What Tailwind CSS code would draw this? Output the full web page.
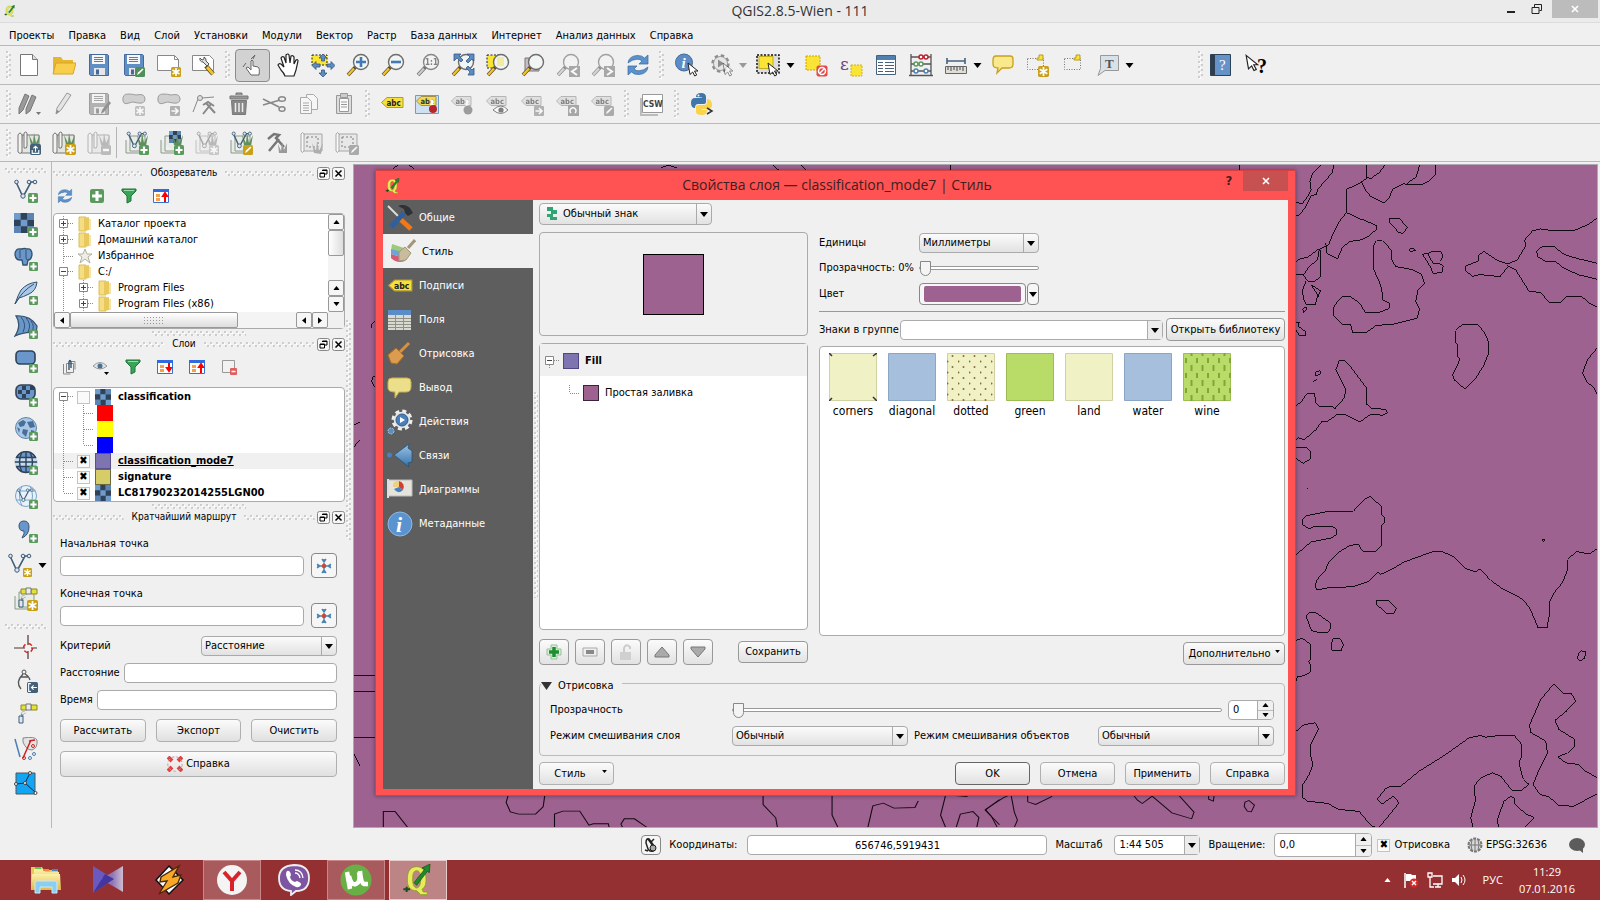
<!DOCTYPE html>
<html lang="ru">
<head>
  <meta charset="UTF-8">
  <meta name="viewport" content="width=device-width, initial-scale=1.0">
  <title>QGIS2.8.5-Wien - 111</title>
  <script src="https://cdn.jsdelivr.net/npm/@tailwindcss/browser@4"></script>
</head>
<body class="h-screen flex flex-col overflow-hidden bg-[#f0f0f0] text-black text-[11px] leading-4 font-['DejaVu_Sans_Condensed','DejaVu_Sans',sans-serif]">

  <!-- Shared icons -->
  <svg class="absolute h-0 w-0">
    <defs>
      <pattern id="grip" width="6" height="5" patternUnits="userSpaceOnUse"><path d="M1 1h2v2H1zM4 4h2v1H4z" fill="#fff"/><path d="M0 0h2v2H0zM3 3h2v2H3z" fill="#cdcdcd"/></pattern>
      <pattern id="dots" width="11" height="11" patternUnits="userSpaceOnUse"><circle cx="5.500" cy="3" r="1" fill="#8a6a3a"/><circle cx="0.500" cy="8.500" r="1" fill="#8a6a3a"/></pattern>
      <pattern id="dashes" width="11" height="15" patternUnits="userSpaceOnUse"><path d="M3 5v5M8.500 0v3M8.500 12v3" stroke="#7fa53b" stroke-width="2"/></pattern>
      <linearGradient id="blue" x2="0" y2="1"><stop stop-color="#9cc4e8"/><stop offset="1" stop-color="#3572a8"/></linearGradient>
      <linearGradient id="violet" x2="1"><stop stop-color="#8f86d8"/><stop offset=".5" stop-color="#8a80cc"/><stop offset="1" stop-color="#d9d6ee"/></linearGradient>
      <linearGradient id="gold" x2="0" y2="1"><stop stop-color="#fdf0a8"/><stop offset="1" stop-color="#dcb94a"/></linearGradient>
    </defs>
    <symbol id="b-plus" viewBox="0 0 10 10"><rect width="10" height="10" rx="1.500" fill="#5a9a5c"/><path d="M5 1.500v7M1.500 5h7" stroke="#fff" stroke-width="2.200"/></symbol>
    <symbol id="b-star" viewBox="0 0 10 10"><rect width="10" height="10" rx="1.500" fill="#c9a017"/><path d="M5 1v8M1.500 3l7 4M8.500 3l-7 4" stroke="#fff" stroke-width="1.600"/></symbol>
    <symbol id="b-pen" viewBox="0 0 10 10"><rect width="10" height="10" rx="1.500" fill="#4f8f58"/><path d="M2 8l1-2.500L7.500 1.500l1 1L4 7z" fill="#fff"/></symbol>
    <symbol id="b-penY" viewBox="0 0 10 10"><rect width="10" height="10" rx="1.500" fill="#c9a017"/><path d="M2 8l1-2.500L7.500 1.500l1 1L4 7z" fill="#fff"/></symbol>
    <symbol id="b-up" viewBox="0 0 10 10"><rect width="10" height="10" rx="1.500" fill="#41607a"/><path d="M5 7V2M3 4l2-2 2 2M2 5.500v3h6v-3" fill="none" stroke="#fff"/></symbol>
    <symbol id="b-left" viewBox="0 0 10 10"><rect width="10" height="10" rx="1.500" fill="#41607a"/><path d="M3.500 1.500h-2v7h2M9 5H4M6 3L4 5l2 2" fill="none" stroke="#fff"/></symbol>
    <symbol id="b-minus" viewBox="0 0 10 10"><rect width="10" height="10" rx="1.500" fill="#888"/><path d="M2 5h6" stroke="#fff" stroke-width="2.400"/></symbol>
    <symbol id="b-right" viewBox="0 0 10 10"><rect width="10" height="10" rx="1" fill="#888"/><path d="M1.500 5h6M5 2l3 3-3 3" fill="none" stroke="#fff" stroke-width="1.600"/></symbol>
    <symbol id="lens" viewBox="0 0 24 24"><path d="M9.500 14L2 22" stroke="#5a4a2a" stroke-width="3.600"/><path d="M8 15.500L2.300 21.700" stroke="#f2c230" stroke-width="2.400"/><circle cx="15" cy="9" r="7.500" fill="#f1f5f3" stroke="#6c6c6c" stroke-width="1.400"/></symbol>
    <symbol id="disk" viewBox="0 0 24 24"><path d="M2.500 1.500h18l1 1v20h-18l-1-1z" fill="#5f8fc4" stroke="#44699a"/><path d="M5 2h13v9H5z" fill="#f6f6f6"/><path d="M7 4.500h9M7 6.500h9M7 8.500h9" stroke="#777"/><path d="M7 15h11v7H7z" fill="#e4e6ea"/><path d="M9 16.500h3v5H9z" fill="#44699a"/></symbol>
    <symbol id="cursor" viewBox="0 0 12 15"><path d="M1 1l10 8H7.500l2.200 4-2 1-2-4L3 12.500z" fill="#fff" stroke="#222"/></symbol>
    <symbol id="tag" viewBox="0 0 24 24"><path d="M7 6.500h16v10H7L1.500 11.500z" fill="#f6e13c" stroke="#b4992a"/><text x="6.500" y="14.500" font-size="8" font-weight="700" font-family="DejaVu Sans Condensed" fill="#222">abc</text></symbol>
    <symbol id="tagS" viewBox="0 0 24 24"><path d="M6 4.500h15v9H6L1.500 9z" fill="#f0dc50" stroke="#a89040"/><text x="5.500" y="12" font-size="7.500" font-weight="700" font-family="DejaVu Sans Condensed" fill="#333">abc</text></symbol>
    <symbol id="vee" viewBox="0 0 24 24"><path d="M2 3l7 15L17 3h5" fill="none" stroke="#3f5e78" stroke-width="1.600"/><g fill="#dfe8f2" stroke="#3f5e78"><circle cx="2.500" cy="3" r="1.800"/><circle cx="15" cy="3" r="1.800"/><circle cx="21" cy="3" r="1.800"/><circle cx="9" cy="17" r="2.200"/></g></symbol>
    <symbol id="check" viewBox="0 0 12 12"><path d="M0 0h12v12H0z" fill="#6f9bcd"/><path d="M0 4h4v4H0zM4 0h4v4H4zM8 4h4v4H8zM4 8h4v4H4z" fill="#2f4257"/><path d="M8 0h4v4H8zM0 8h4v4H0z" fill="#5b84b4"/></symbol>
    <symbol id="scroll" viewBox="0 0 24 24"><path d="M5 4h17v18H4z" fill="#e4e4e0" stroke="#777"/><path d="M1 4q2-4 4 0v17q-2 3-4 0zM7 2q2-2 3 0v13q0 3-3 2z" fill="#f2f2f0" stroke="#777"/></symbol>
    <symbol id="grass" viewBox="0 0 24 24"><path d="M14 14L12 4l4 8 1-10 2 10 4-8-2 11z" fill="#5f8f5a"/></symbol>
    <symbol id="layer" viewBox="0 0 24 24"><path d="M5 5h15v15H5zM1 9v13h14" fill="#e8ece6" stroke="#8a9a8a"/></symbol>
    <symbol id="refresh" viewBox="0 0 24 24"><path d="M2 10Q3 3 11 2.500q5-.3 7.500 2.500L22 2v9h-9l3-3q-2-2-5-1.800Q6 6.500 2 10zM22 14q-1 7-9 7.500-5 .3-7.500-2.500L2 22v-9h9l-3 3q2 2 5 1.800 5-.3 9-3.800z" fill="#5b92cd" stroke="#39699f" stroke-width=".7"/></symbol>
    <symbol id="gear" viewBox="0 0 24 24"><circle cx="12" cy="12" r="8" fill="none" stroke="#8d8d8d" stroke-width="5" stroke-dasharray="3.500 2.780"/><circle cx="12" cy="12" r="8" fill="#e6e6e6" stroke="#8d8d8d"/></symbol>
    <symbol id="gearW" viewBox="0 0 24 24"><circle cx="12" cy="12" r="9" fill="none" stroke="#eee" stroke-width="5" stroke-dasharray="4 3.070"/><circle cx="12" cy="12" r="9" fill="#e6e6e6"/></symbol>
    <symbol id="funnel" viewBox="0 0 16 16"><path d="M1 1h14v2l-5 5v5l-4 2V8L1 3z" fill="#39a457" stroke="#1f7336"/><path d="M3 2.500h10" stroke="#9bdcaa"/></symbol>
    <symbol id="expand" viewBox="0 0 16 16"><path d="M.5 1.500h15v13H.5z" fill="#fff" stroke="#3a6fcf"/><path d="M0 1h16v3H0z" fill="#2e6be0"/><path d="M3 6h4v3H3zM3 10h4v3H3z" fill="#f5a04a"/></symbol>
    <symbol id="folder" viewBox="0 0 14 16"><path d="M1 1h7v14H1z" fill="#f5dd83" stroke="#d9bd5b"/><path d="M6 2l5-1v13l-5 1z" fill="#e9c95e"/><path d="M11 3h2v11h-2z" fill="#f3e3a6"/></symbol>
    <symbol id="t-plus" viewBox="0 0 20 16"><path d="M9.500 0v16M10 7.500h9" stroke="#8a8a8a" stroke-dasharray="1 1"/><path d="M5.500 3.500h8v8h-8z" fill="#fff" stroke="#888"/><path d="M7 7.500h5M9.500 5v5" stroke="#444"/></symbol>
    <symbol id="t-minus" viewBox="0 0 20 16"><path d="M9.500 12v4M10 7.500h9" stroke="#8a8a8a" stroke-dasharray="1 1"/><path d="M5.500 3.500h8v8h-8z" fill="#fff" stroke="#888"/><path d="M7 7.500h5" stroke="#444"/></symbol>
    <symbol id="t-mid" viewBox="0 0 20 16"><path d="M9.500 0v16M10 8.500h9" stroke="#8a8a8a" stroke-dasharray="1 1"/></symbol>
    <symbol id="t-end" viewBox="0 0 20 16"><path d="M9.500 0v8M10 8.500h9" stroke="#8a8a8a" stroke-dasharray="1 1"/></symbol>
    <symbol id="t-line" viewBox="0 0 20 16"><path d="M9.500 0v16" stroke="#8a8a8a" stroke-dasharray="1 1"/></symbol>
    <symbol id="down" viewBox="0 0 8 5"><path d="M0 0h8L4 5z"/></symbol>
    <symbol id="up" viewBox="0 0 8 5"><path d="M0 5h8L4 0z"/></symbol>
    <symbol id="float" viewBox="0 0 13 13"><rect x=".5" y=".5" width="12" height="12" rx="2" fill="#f6f6f6" stroke="#888"/><path d="M5.500 3h4.500v4H8M3 6h4.500v4H3zM5 3.500h5M3 6.500h5" fill="none" stroke="#000"/></symbol>
    <symbol id="close" viewBox="0 0 13 13"><rect x=".5" y=".5" width="12" height="12" rx="2" fill="#f6f6f6" stroke="#888"/><path d="M3.500 3.500l6 6M9.500 3.500l-6 6" stroke="#000" stroke-width="1.500"/></symbol>
    <symbol id="cross" viewBox="0 0 16 16"><path d="M8 1v14M1 8h14M6 1l2 3 2-3M6 15l2-3 2 3M1 6l3 2-3 2M15 6l-3 2 3 2" fill="none" stroke="#4a86b4" stroke-width="1.500"/><circle cx="8" cy="8" r="2.300" fill="#c94a3c"/></symbol>
    <symbol id="sat" viewBox="0 0 24 24"><path d="M7 2h6v5H7zM17 2h6v5h-6z" fill="#e3e23c" stroke="#8a8a20"/><path d="M12 1h5v6h-5z" fill="#ececec" stroke="#777"/><path d="M9 13q0-3 3-3M7 12q0-4 4-4" fill="none" stroke="#bbb"/><path d="M5 13h4v7H5zM8 11v3" fill="#dfe8f2" stroke="#3f5e78"/></symbol>
    <symbol id="qgis" viewBox="0 0 24 24"><path d="M11 2C5 2 4 7 4 12s2 8 7 8l3 3h5v-2h-3l-1-2c3-2 3-5 3-8 0-5-2-9-7-9zm0 3c3 0 3 4 3 7s-1 6-3 6-3-3-3-6 0-7 3-7z" fill="#e6ec5a" stroke="#8a9a20" stroke-width=".6"/><path d="M9 14L17 4l-2-1 6-3-.5 6.500-1.500-1L11 16z" fill="#1e8a2c" stroke="#0a4a12" stroke-width=".5"/><path d="M1 19h5M3.500 17v4" stroke="#16501c" stroke-width="1.500"/></symbol>
  </svg>

  <!-- Title bar -->
  <header class="flex h-[23px] shrink-0 items-center border-b border-[#dcdcdc] bg-[#ebebeb] pl-1">
    <svg class="size-3"><use href="#qgis"/></svg>
    <h1 class="flex-1 pl-[86px] text-center text-[14px] leading-5 text-[#333] font-['Open_Sans',sans-serif]">QGIS2.8.5-Wien - 111</h1>
    <div class="flex self-start">
      <button class="flex h-[18px] w-[26px] items-center justify-center" aria-label="Свернуть"><svg class="size-3" viewBox="0 0 12 12"><path d="M2 9h8" stroke="#222" stroke-width="2"/></svg></button>
      <button class="flex h-[18px] w-[26px] items-center justify-center" aria-label="Восстановить"><svg class="size-3" viewBox="0 0 12 12"><path d="M1 4.500h7v6H1zM3.500 4V1.500h7v6H8.500" fill="none" stroke="#222"/></svg></button>
      <button class="mr-0.5 ml-0.5 flex h-[18px] w-[46px] items-center justify-center bg-[#bcbcbc]" aria-label="Закрыть"><svg class="size-2" viewBox="0 0 8 8"><path d="M1 1l6 6M7 1L1 7" stroke="#fff" stroke-width="1.600"/></svg></button>
    </div>
  </header>

  <!-- Menu -->
  <nav class="flex h-[22px] shrink-0 items-center gap-[14px] pl-[9px] pt-1">
    <a href="#">Проекты</a><a href="#">Правка</a><a href="#">Вид</a><a href="#">Слой</a><a href="#">Установки</a><a href="#">Модули</a><a href="#">Вектор</a><a href="#">Растр</a><a href="#">База данных</a><a href="#">Интернет</a><a href="#">Анализ данных</a><a href="#">Справка</a>
  </nav>

  <!-- Toolbar: files and navigation -->
  <div class="flex h-[39px] shrink-0 items-center border-t border-[#b9b9b9] pl-[6px] [&_button]:flex [&_button]:h-[33px] [&_button]:w-[35px] [&_button]:shrink-0 [&_button]:items-center [&_button]:justify-center">
    <svg class="h-7 w-[5px]"><rect width="100%" height="100%" fill="url(#grip)"/></svg>
    <button aria-label="Создать"><svg class="size-6" viewBox="0 0 24 24"><path d="M3.500 1.500h12l5 5v16h-17z" fill="#fff" stroke="#777"/><path d="M15.500 1.500v5h5" fill="#ddd" stroke="#777"/></svg></button>
    <button aria-label="Открыть"><svg class="size-6" viewBox="0 0 24 24"><path d="M1 4h8l2 3h10v13H1z" fill="#e8b52e"/><path d="M4 10h20l-3 11H1z" fill="#f8cf4d" stroke="#d9a520"/></svg></button>
    <button aria-label="Сохранить"><svg class="size-6"><use href="#disk"/></svg></button>
    <button aria-label="Сохранить как"><svg class="size-6"><use href="#disk"/><use href="#b-pen" x="13" y="14" width="10" height="10"/></svg></button>
    <button aria-label="Новый макет"><svg class="size-6" viewBox="0 0 24 24"><path d="M.5 2.500h17l4 4v11H.5z" fill="#fff" stroke="#888"/><path d="M17.500 2.500v4h4" fill="none" stroke="#888"/><use href="#b-star" x="14" y="14" width="10" height="10"/></svg></button>
    <button aria-label="Менеджер макетов"><svg class="size-6" viewBox="0 0 24 24"><path d="M.5 2.500h17l4 4v11H.5z" fill="#fff" stroke="#888"/><path d="M14 13l7 8" stroke="#5a4a2a" stroke-width="4.500"/><path d="M15 14l6 7" stroke="#f2c230" stroke-width="3"/><path d="M15 13l-4-4a3 3 0 0 1-3-4l2 2 2-1V4a3.500 3.500 0 0 1 2 4l3 3z" fill="#ddd" stroke="#555"/></svg></button>
    <svg class="mr-[5px] ml-1 h-7 w-[5px]"><rect width="100%" height="100%" fill="url(#grip)"/></svg>
    <button class="rounded-sm border border-[#8c8c8c] bg-[#d2d2d2]" aria-label="Касание"><svg class="size-6" viewBox="0 0 24 24"><path d="M10 22L5 15l2-1 3 3V8q1-2 2 0v5l5 1q2 1 1 8z" fill="#fff" stroke="#666"/><path d="M10 6l4-4M2 14l3-4M12 6l2-4" stroke="#666"/></svg></button>
    <button aria-label="Рука"><svg class="size-6" viewBox="0 0 24 24"><path d="M9 23q-1-3-4-6l-3-5q1-2 3-1l3 3L5 5q1-2 3-1l2 6V2q2-2 3 0l1 8 1-7q2-1 3 1v7l2-4q2-1 2 1l-2 9-2 6z" fill="#fff" stroke="#222" stroke-width="1.200"/></svg></button>
    <button aria-label="Прокрутка к выделению"><svg class="size-6" viewBox="0 0 24 24"><path d="M1 2h15v10H1z" fill="#fbe534" stroke="#222" stroke-dasharray="2 1.500"/><path d="M12 1l4 4h-2.500v3h-3V5H8zM12 24l4-4h-2.500v-3h-3v3H8zM1 12.500l4-4V11h4v3H5v2.500zM24 12.500l-4-4V11h-4v3h4v2.500z" fill="#5b8cc4" stroke="#34597f" stroke-width=".8"/></svg></button>
    <button aria-label="Увеличить"><svg class="size-6" viewBox="0 0 24 24"><use href="#lens"/><path d="M15 4v10M10 9h10" stroke="#4478b4" stroke-width="2.600"/></svg></button>
    <button aria-label="Уменьшить"><svg class="size-6" viewBox="0 0 24 24"><use href="#lens"/><path d="M10 9h10" stroke="#4478b4" stroke-width="2.600"/></svg></button>
    <button aria-label="Реальный размер"><svg class="size-6 opacity-80 grayscale" viewBox="0 0 24 24"><use href="#lens"/><text x="9" y="12" font-size="8" font-weight="700" fill="#666">1:1</text></svg></button>
    <button aria-label="Полный охват"><svg class="size-6" viewBox="0 0 24 24"><use href="#lens"/><path d="M3 1h7L8 3l4 4-2 2-4-4-3 3zM23 1v7l-2-2-4 4-2-2 4-4-3-3zM23 22v-7l-2 2-4-4-2 2 4 4-2 3z" fill="#5b8cc4" stroke="#34597f" stroke-width=".8"/></svg></button>
    <button aria-label="Увеличить до выделения"><svg class="size-6" viewBox="0 0 24 24"><path d="M1 2h12v13H1z" fill="#fbe534" stroke="#222" stroke-dasharray="2 1.500"/><use href="#lens"/><path d="M11 4h7v9h-7z" fill="#f3eba0"/></svg></button>
    <button aria-label="Увеличить до слоя"><svg class="size-6" viewBox="0 0 24 24"><path d="M4 5h14v13H4z" fill="#c9bcc9" stroke="#777"/><use href="#lens"/></svg></button>
    <button aria-label="Предыдущий охват"><svg class="size-6 opacity-60 grayscale" viewBox="0 0 24 24"><use href="#lens"/><path d="M13 13h11v11H13z" fill="#777"/><path d="M21 15l-5 3.500 5 3.500" fill="none" stroke="#fff" stroke-width="2"/></svg></button>
    <button aria-label="Следующий охват"><svg class="size-6 opacity-60 grayscale" viewBox="0 0 24 24"><use href="#lens"/><path d="M13 13h11v11H13z" fill="#777"/><path d="M16 15l5 3.500-5 3.500" fill="none" stroke="#fff" stroke-width="2"/></svg></button>
    <button aria-label="Обновить"><svg class="size-6"><use href="#refresh"/></svg></button>
    <svg class="mr-[5px] ml-1 h-7 w-[5px]"><rect width="100%" height="100%" fill="url(#grip)"/></svg>
    <button aria-label="Определить"><svg class="size-6" viewBox="0 0 24 24"><circle cx="9" cy="9.500" r="8.500" fill="#5b8cc4" stroke="#44699a"/><text x="6.500" y="15" font-size="15" font-style="italic" font-weight="700" font-family="Liberation Serif" fill="#fff">i</text><use href="#cursor" x="12" y="9" width="12" height="15"/></svg></button>
    <button aria-label="Действие"><svg class="size-6" viewBox="0 0 24 24"><use href="#gear" width="21" height="21"/><path d="M8 6.500l6 4-6 4z" fill="#8d8d8d"/><use href="#cursor" x="12" y="9" width="12" height="15" opacity=".5"/></svg></button>
    <svg class="mr-[3px] h-[5px] w-2" fill="#999"><use href="#down"/></svg>
    <button aria-label="Выделить"><svg class="size-6" viewBox="0 0 24 24"><path d="M1 2h22v18H1z" fill="#ddd" stroke="#111" stroke-width="1.500" stroke-dasharray="2 1.500"/><path d="M3 3.500h14v12H3z" fill="#fbe534" stroke="#c4ac20"/><use href="#cursor" x="11" y="9" width="12" height="15"/></svg></button>
    <svg class="mr-[3px] ml-px h-[5px] w-[9px]"><use href="#down"/></svg>
    <button aria-label="Снять выделение"><svg class="size-6" viewBox="0 0 24 24"><path d="M2 3h14v14H2z" fill="#fbe534" stroke="#d0a010" stroke-dasharray="2 1"/><rect x="12.500" y="12.500" width="11" height="11" rx="2" fill="#e04a4a"/><circle cx="18" cy="18" r="3.500" fill="none" stroke="#fff" stroke-width="1.500"/><path d="M15.500 20.500l5-5" stroke="#fff" stroke-width="1.500"/></svg></button>
    <button aria-label="Выделить по выражению"><svg class="size-6" viewBox="0 0 24 24"><text x="1" y="17" font-size="17" font-family="DejaVu Serif" fill="#71437c">ε</text><path d="M12 12h11v11H12z" fill="#fbe534" stroke="#d0b010" stroke-dasharray="2 1"/></svg></button>
    <button aria-label="Таблица атрибутов"><svg class="size-6" viewBox="0 0 24 24"><path d="M2.500 2.500h19v19h-19z" fill="#fff" stroke="#44627e"/><path d="M3 3h18v4H3z" fill="#4f80b0"/><path d="M4 9.500h5M11 9.500h9M4 12.500h5M11 12.500h9M4 15.500h5M11 15.500h9M4 18.500h5M11 18.500h9" stroke="#44627e"/></svg></button>
    <button aria-label="Статистика"><svg class="size-6" viewBox="0 0 24 24"><path d="M2 1v21M22 1v21M0 22.500h24M2 4h20M2 11h20M2 18h20" fill="none" stroke="#555" stroke-width="1.300"/><g fill="#fff" stroke-width="1.500"><g stroke="#b23"><circle cx="12" cy="4" r="2"/><circle cx="17" cy="4" r="2"/></g><g stroke="#5a9a5c"><circle cx="7" cy="11" r="2"/><circle cx="12" cy="11" r="2"/></g><g stroke="#4f80b0"><circle cx="7" cy="18" r="2"/><circle cx="17" cy="18" r="2"/></g></g></svg></button>
    <button aria-label="Измерить"><svg class="size-6" viewBox="0 0 24 24"><path d="M3 8h18M3 5v6M21 5v6" stroke="#44627e" stroke-width="1.600"/><path d="M1.500 13.500h21v7h-21z" fill="#e0ded6" stroke="#666"/><path d="M4 14v3M7 14v4M10 14v3M13 14v4M16 14v3M19 14v4" stroke="#444"/></svg></button>
    <svg class="mr-[3px] h-[5px] w-[9px]"><use href="#down"/></svg>
    <button aria-label="Подсказки"><svg class="size-6" viewBox="0 0 24 24"><path d="M5 3h14q3 0 3 3v5q0 4-4 4h-7l-5 5 1-5q-5 0-5-4V7q0-4 3-4z" fill="#fae88c" stroke="#c8a01c" stroke-width="1.300"/></svg></button>
    <button aria-label="Новая закладка"><svg class="size-6" viewBox="0 0 24 24"><path d="M1.500 5.500h16v11h-16z" fill="none" stroke="#777" stroke-dasharray="1 1.500"/><path d="M13 2h4v5h-6V5h2z" fill="#fbe534" stroke="#b4992a"/><use href="#b-star" x="12" y="13" width="11" height="11"/></svg></button>
    <button aria-label="Закладки"><svg class="size-6" viewBox="0 0 24 24"><path d="M3.500 5.500h16v11h-16z" fill="none" stroke="#777" stroke-dasharray="1 1.500"/><path d="M15 2h4v5h-6V5h2z" fill="#fbe534" stroke="#b4992a"/></svg></button>
    <button aria-label="Аннотация"><svg class="size-6" viewBox="0 0 24 24"><path d="M4.500 2.500h18v15H9l-7 5 2.500-7z" fill="#d8e0e8" stroke="#999"/><text x="9" y="15" font-size="13" font-weight="700" font-family="Liberation Serif" fill="#555">T</text></svg></button>
    <svg class="mr-16 h-[5px] w-[9px]"><use href="#down"/></svg>
    <svg class="h-7 w-[5px]"><rect width="100%" height="100%" fill="url(#grip)"/></svg>
    <button aria-label="Руководство"><svg class="size-6" viewBox="0 0 24 24"><path d="M1.500 1.500h20v21h-20z" fill="#6593c8" stroke="#2c4258"/><path d="M2 2h4v20H2z" fill="#2c3e50"/><text x="10" y="17" font-size="15" font-family="Liberation Serif" fill="#fff">?</text></svg></button>
    <button aria-label="Что это?"><svg class="size-6" viewBox="0 0 24 24"><use href="#cursor" x="1" y="1" width="14" height="18"/><text x="13" y="20" font-size="20" font-weight="700" font-family="Liberation Serif">?</text></svg></button>
  </div>

  <!-- Toolbar: editing and labels -->
  <div class="flex h-[39px] shrink-0 items-center border-t border-[#b9b9b9] pl-[6px] [&_button]:flex [&_button]:h-[33px] [&_button]:w-[35px] [&_button]:shrink-0 [&_button]:items-center [&_button]:justify-center">
    <svg class="h-7 w-[5px]"><rect width="100%" height="100%" fill="url(#grip)"/></svg>
    <button aria-label="Правки"><svg class="size-6" viewBox="0 0 24 24"><path d="M2 16L8 2l4 2-6 14-4 4zM9 17l6-14 4 2-6 14-4 3z" fill="#9a9a9a" stroke="#777"/><path d="M19 20h5l-2.500 3z" fill="#777"/></svg></button>
    <button aria-label="Режим правки"><svg class="size-6" viewBox="0 0 24 24"><path d="M4 22l1-6L15 1l4 2L9 18z" fill="#e4e4e4" stroke="#999"/><path d="M4 22l1-4 2.500 1.500z" fill="#888"/></svg></button>
    <button aria-label="Сохранить правки"><svg class="size-6 opacity-60 grayscale" viewBox="0 0 24 24"><use href="#disk"/><path d="M14 22l1-4 7-9 2 2-7 9z" fill="#555"/></svg></button>
    <button aria-label="Добавить объект"><svg class="size-6 opacity-60 grayscale" viewBox="0 0 24 24"><path d="M1 9q-1-7 5-7 5 0 8 1 9-2 9 4 0 5-7 4-6-2-9 0-5 2-6-2z" fill="#bbb" stroke="#666"/><use href="#b-star" x="13" y="14" width="10" height="10"/></svg></button>
    <button aria-label="Переместить объект"><svg class="size-6 opacity-60 grayscale" viewBox="0 0 24 24"><path d="M1 9q-1-7 5-7 5 0 8 1 9-2 9 4 0 5-7 4-6-2-9 0-5 2-6-2z" fill="#bbb" stroke="#666"/><use href="#b-right" x="13" y="14" width="10" height="10"/></svg></button>
    <button aria-label="Редактор узлов"><svg class="size-6" viewBox="0 0 24 24" fill="none" stroke="#888"><path d="M1 20L6 7M10 6l12-1"/><circle cx="8" cy="6" r="2.500" fill="#ddd"/><path d="M11 22l8-10M14 11l9 10" stroke-width="2"/><path d="M11 13l5-3 6 4" stroke-width="2"/></svg></button>
    <button aria-label="Удалить"><svg class="size-6" viewBox="0 0 24 24"><path d="M9 3V1h6v2M3 4h18v3H3z" fill="#999" stroke="#777"/><path d="M4.500 8.500h15l-1 14h-13z" fill="#888" stroke="#777"/><path d="M8.500 11v9M12 11v9M15.500 11v9" stroke="#eee" stroke-width="1.500"/></svg></button>
    <button aria-label="Вырезать"><svg class="size-6" viewBox="0 0 24 24" fill="none" stroke="#888" stroke-width="1.500"><path d="M1 7l16 8M1 13l17-5"/><ellipse cx="20" cy="7" rx="3.500" ry="2.300"/><ellipse cx="20" cy="17" rx="3" ry="2.300"/></svg></button>
    <button aria-label="Копировать"><svg class="size-6" viewBox="0 0 24 24" fill="#f6f6f6" stroke="#aaa"><path d="M9.500 2.500h7l4 4v11h-11z"/><path d="M3.500 5.500h7l4 4v12h-11z"/><path d="M6 11h6M6 13.500h6M6 16h6M6 18.500h6"/></svg></button>
    <button aria-label="Вставить"><svg class="size-6" viewBox="0 0 24 24" stroke="#999"><path d="M4.500 3.500h15v18h-15z" fill="#ddd"/><path d="M7.500 6.500h9v13h-9z" fill="#fafafa"/><path d="M8.500 1.500h7v4h-7z" fill="#ccc"/><path d="M9 10h6M9 12.500h6M9 15h6"/></svg></button>
    <svg class="mx-1 h-7 w-[5px]"><rect width="100%" height="100%" fill="url(#grip)"/></svg>
    <button aria-label="Подписи"><svg class="size-6"><use href="#tag" y="-1" width="24" height="24"/></svg></button>
    <button aria-label="Закреплённые подписи"><svg class="size-6" viewBox="0 0 24 24"><path d="M.5 3.500h23v18H.5z" fill="#cfe0f2" stroke="#6f9bcd"/><use href="#tagS"/><path d="M17 8v8" stroke="#fff" stroke-width="3"/><circle cx="18" cy="17" r="4" fill="#b8262c"/></svg></button>
    <button aria-label="Закрепить"><svg class="size-6 opacity-60 grayscale" viewBox="0 0 24 24"><use href="#tagS"/><path d="M17 8v8" stroke="#fff" stroke-width="3"/><circle cx="18" cy="18" r="4.500" fill="#666"/></svg></button>
    <button aria-label="Показать подписи"><svg class="size-6 opacity-60 grayscale" viewBox="0 0 24 24"><use href="#tagS"/><path d="M8 18q8-8 15 0-7 7-15 0z" fill="#fff" stroke="#333"/><circle cx="16" cy="18" r="2.600" fill="#333"/></svg></button>
    <button aria-label="Переместить подпись"><svg class="size-6 opacity-60 grayscale" viewBox="0 0 24 24"><use href="#tagS"/><use href="#b-right" x="14" y="14" width="10" height="10"/></svg></button>
    <button aria-label="Повернуть подпись"><svg class="size-6 opacity-60 grayscale" viewBox="0 0 24 24"><use href="#tagS"/><path d="M13 13h11v11H13z" fill="#777"/><path d="M16 21a3 3 0 1 1 4 0" fill="none" stroke="#fff" stroke-width="1.500"/></svg></button>
    <button aria-label="Изменить подпись"><svg class="size-6 opacity-60 grayscale" viewBox="0 0 24 24"><use href="#tagS"/><use href="#b-pen" x="14" y="14" width="10" height="10"/></svg></button>
    <svg class="mx-[5px] h-7 w-[5px]"><rect width="100%" height="100%" fill="url(#grip)"/></svg>
    <button aria-label="CSW"><svg class="size-6" viewBox="0 0 24 24"><path d="M1 6v17h17" fill="none" stroke="#bbb" stroke-width="2"/><path d="M2.500 2.500h20v18h-20z" fill="#fff" stroke="#999"/><text x="3" y="14.500" font-size="8.500" font-weight="700" font-family="DejaVu Sans Condensed" fill="#444">CSW</text></svg></button>
    <svg class="mx-[5px] h-7 w-[5px]"><rect width="100%" height="100%" fill="url(#grip)"/></svg>
    <button aria-label="Консоль Python"><svg class="size-6" viewBox="0 0 24 24"><path d="M6 5q0-4 5-4t5 4v5q0 2-3 2H8q-3 0-3 4-4 0-4-5t4-5h7V5.500z" fill="#3f77ab"/><circle cx="8.500" cy="3.500" r="1" fill="#fff"/><path d="M17 7q5 0 5 6 0 4-4 4h-6v1h5q0 5-5 5-6 0-6-3v-5q0-2 3-2h5q3 0 3-3z" fill="#f8d34b"/><path d="M17 16l5 3-5 3" fill="none" stroke="#333" stroke-width="1.500"/></svg></button>
  </div>

  <!-- Toolbar: GRASS -->
  <div class="flex h-[39px] shrink-0 items-center border-y border-[#b9b9b9] pl-[6px] [&_button]:flex [&_button]:h-[33px] [&_button]:w-[35px] [&_button]:shrink-0 [&_button]:items-center [&_button]:justify-center">
    <svg class="h-7 w-[5px]"><rect width="100%" height="100%" fill="url(#grip)"/></svg>
    <button aria-label="Открыть набор"><svg class="size-6" viewBox="0 0 24 24"><use href="#scroll"/><use href="#grass"/><use href="#b-up" x="13" y="13" width="11" height="11"/></svg></button>
    <button aria-label="Новый набор"><svg class="size-6" viewBox="0 0 24 24"><use href="#scroll"/><use href="#grass"/><use href="#b-star" x="13" y="13" width="11" height="11"/></svg></button>
    <button aria-label="Закрыть набор"><svg class="size-6 opacity-50 grayscale" viewBox="0 0 24 24"><use href="#scroll"/><use href="#grass"/><use href="#b-minus" x="14" y="14" width="10" height="10"/></svg></button>
    <span class="mr-[2px] h-[31px] w-px bg-[#b4b4b4]"></span>
    <button aria-label="Вектор GRASS"><svg class="size-6" viewBox="0 0 24 24"><use href="#layer"/><use href="#grass"/><use href="#vee" width="24" height="21"/><use href="#b-plus" x="14" y="14" width="10" height="10"/></svg></button>
    <button aria-label="Растр GRASS"><svg class="size-6" viewBox="0 0 24 24"><use href="#layer"/><use href="#check" x="9" width="12" height="12"/><use href="#grass"/><use href="#b-plus" x="14" y="14" width="10" height="10"/></svg></button>
    <button aria-label="Новый вектор GRASS"><svg class="size-6 opacity-50 grayscale" viewBox="0 0 24 24"><use href="#layer"/><use href="#grass"/><use href="#vee" width="24" height="21"/><use href="#b-star" x="14" y="14" width="10" height="10"/></svg></button>
    <button aria-label="Правка вектора GRASS"><svg class="size-6" viewBox="0 0 24 24"><use href="#layer"/><use href="#grass"/><use href="#vee" width="24" height="21"/><use href="#b-penY" x="13" y="14" width="10" height="10"/></svg></button>
    <button aria-label="Инструменты GRASS"><svg class="size-6" viewBox="0 0 24 24"><path d="M3 8l6-5 5 1-3 3 8 9M4 20L14 8" fill="none" stroke="#777" stroke-width="2.500"/><path d="M14 22l-1-9 3 7 1-9 2 8 3-7v10z" fill="#999"/></svg></button>
    <button aria-label="Показать регион"><svg class="size-6 opacity-60 grayscale" viewBox="0 0 24 24"><path d="M4 3h18v17H2z" fill="#e4e4e0" stroke="#777"/><path d="M1 3q2-3 3 0v17q-2 3-3 0z" fill="#fff" stroke="#777"/><path d="M7 6h11v10H7z" fill="none" stroke="#333" stroke-dasharray="2 2"/><use href="#grass" y="8" width="24" height="24"/></svg></button>
    <button aria-label="Изменить регион"><svg class="size-6 opacity-60 grayscale" viewBox="0 0 24 24"><path d="M4 3h18v17H2z" fill="#e4e4e0" stroke="#777"/><path d="M1 3q2-3 3 0v17q-2 3-3 0z" fill="#fff" stroke="#777"/><path d="M7 6h11v10H7z" fill="none" stroke="#333" stroke-dasharray="2 2"/><use href="#b-pen" x="14" y="14" width="10" height="10"/></svg></button>
  </div>

  <main class="flex min-h-0 flex-1">
    <!-- Layer toolbar -->
    <div class="flex w-[52px] shrink-0 flex-col border-r border-[#b9b9b9] pt-[6px] [&_button]:flex [&_button]:h-[34px] [&_button]:shrink-0 [&_button]:items-center [&_button]:justify-center">
      <svg class="mx-[5px] mb-px h-[5px] w-[42px] shrink-0"><rect width="100%" height="100%" fill="url(#grip)"/></svg>
      <button aria-label="Вектор"><svg class="size-6" viewBox="0 0 24 24"><use href="#vee"/><use href="#b-plus" x="14" y="14" width="10" height="10"/></svg></button>
      <button aria-label="Растр"><svg class="size-6" viewBox="0 0 24 24"><use href="#check" width="20" height="20"/><use href="#b-plus" x="14" y="14" width="10" height="10"/></svg></button>
      <button aria-label="PostGIS"><svg class="size-6" viewBox="0 0 24 24"><path d="M1 8q0-7 6-6 4-1 6 0 5-1 5 6-1 5-4 5l-1 5h-4l-1-5H6q-4 0-5-5z" fill="#6a97cb" stroke="#34536f" stroke-width="1.300"/><path d="M6 3v8M12 3v8q1 3 3 2" fill="none" stroke="#34536f"/><use href="#b-plus" x="15" y="15" width="9" height="9"/></svg></button>
      <button aria-label="SpatiaLite"><svg class="size-6" viewBox="0 0 24 24"><path d="M1 23Q4 14 7 9q6-7 16-8-1 9-8 12-6 3-10 4z" fill="#a9c8e8" stroke="#34536f"/><path d="M1 23Q8 10 20 3" fill="none" stroke="#34536f"/><use href="#b-plus" x="15" y="15" width="9" height="9"/></svg></button>
      <button aria-label="MSSQL"><svg class="size-6" viewBox="0 0 24 24"><path d="M2 1q14-1 21 10l-1 7q-10-2-21 3Q8 10 2 1z" fill="#6a97cb" stroke="#34536f" stroke-width="1.300"/><path d="M7 2q6 7 2 15M12 3q6 6 2 14M17 6q4 5 1 11" fill="none" stroke="#34536f"/><use href="#b-plus" x="15" y="15" width="9" height="9"/></svg></button>
      <button aria-label="Oracle"><svg class="size-6" viewBox="0 0 24 24"><rect x="2" y="2" width="19" height="13" rx="4" fill="#6a97cb" stroke="#2f4257" stroke-width="1.600"/><use href="#b-plus" x="15" y="15" width="9" height="9"/></svg></button>
      <button aria-label="Oracle GeoRaster"><svg class="size-6" viewBox="0 0 24 24"><rect x="2" y="2" width="19" height="14" rx="5" fill="#6a97cb" stroke="#2f4257" stroke-width="1.600"/><path d="M8 3h4v4H8zM16 3h4v4h-4zM4 7h4v4H4zM12 7h4v4h-4zM8 11h4v4H8z" fill="#2f4257"/><use href="#b-plus" x="15" y="15" width="9" height="9"/></svg></button>
      <button aria-label="WMS"><svg class="size-6" viewBox="0 0 24 24"><circle cx="12" cy="11" r="10.500" fill="#a9c8e8" stroke="#5f84a8"/><path d="M4 6l5-3 3 2-2 4-4 1zM13 5l6-1 2 6-5 1zM9 12l5 1-2 7-4-4zM3 10l3 2-1 4zM17 13l4 1-4 4z" fill="#4a6f96"/><use href="#b-plus" x="15" y="15" width="9" height="9"/></svg></button>
      <button aria-label="WCS"><svg class="size-6" viewBox="0 0 24 24"><circle cx="12" cy="11" r="10.500" fill="#6a97cb" stroke="#2f4257" stroke-width="1.400"/><path d="M1 7h22v8H1z" fill="#c3daf0"/><path d="M2 6.500h20M1 11h22M2 15.500h20M12 1v21M8 1q-5 10 0 20M16 1q5 10 0 20" fill="none" stroke="#2f4257" stroke-width="1.400"/><use href="#b-plus" x="15" y="15" width="9" height="9"/></svg></button>
      <button aria-label="WFS"><svg class="size-6" viewBox="0 0 24 24"><circle cx="12" cy="11" r="10.500" fill="#e8f2fb" stroke="#7ba3cb"/><path d="M2 6h20M2 15h20M8 1q-5 10 0 20M16 1q5 10 0 20" fill="none" stroke="#7ba3cb"/><use href="#vee" x="3" y="3" width="17" height="17"/><use href="#b-plus" x="15" y="15" width="9" height="9"/></svg></button>
      <button aria-label="Текст с разделителями"><svg class="size-6" viewBox="0 0 24 24"><path d="M5 7q0-5 5-5t5 6q0 8-7 11 3-5 2-7-5 0-5-5z" fill="#6a97cb" stroke="#34536f"/><use href="#b-plus" x="15" y="15" width="9" height="9"/></svg></button>
      <button class="gap-1.5 pl-1" aria-label="Создать слой"><svg class="size-6" viewBox="0 0 24 24"><use href="#vee"/><use href="#b-star" x="15" y="15" width="9" height="9"/></svg><svg class="h-[5px] w-[9px]"><use href="#down"/></svg></button>
      <button aria-label="Слой GPX"><svg class="size-6" viewBox="0 0 24 24"><use href="#layer"/><use href="#sat"/><use href="#b-star" x="13" y="13" width="11" height="11"/></svg></button>
      <svg class="mx-[5px] mt-2 mb-px h-[5px] w-[42px] shrink-0"><rect width="100%" height="100%" fill="url(#grip)"/></svg>
      <button aria-label="Захват координат"><svg class="size-6" viewBox="0 0 24 24"><path d="M0 13h11M17 13h6M14 0v10M14 16v8" stroke="#533" stroke-width="1.200"/><circle cx="14" cy="13" r="4.500" fill="none" stroke="#c22" stroke-width="1.500" stroke-dasharray="4 3"/></svg></button>
      <button aria-label="Поиск DXF"><svg class="size-6" viewBox="0 0 24 24"><circle cx="10" cy="3" r="2" fill="none" stroke="#555"/><path d="M9 5q-8 8-2 15M11 5q4 2 5 6M6 8h8" fill="none" stroke="#555" stroke-width="1.300"/><use href="#b-left" x="13" y="13" width="11" height="11"/></svg></button>
      <button aria-label="GPS"><svg class="size-6"><use href="#sat"/></svg></button>
      <button aria-label="Топология"><svg class="size-6" viewBox="0 0 24 24" fill="none"><path d="M1 2l5 18" stroke="#4a7fb5" stroke-width="1.500"/><path d="M9 1q12-2 14 2 1 8-5 10-6 0-9-8z" fill="#e4e4e4" stroke="#888"/><path d="M9 21l8-18M15 4l6-1" stroke="#c22" stroke-width="1.500"/><g stroke="#c22"><circle cx="10" cy="21" r="1.500"/><circle cx="19" cy="9" r="1.500"/></g><g stroke="#4a7fb5"><circle cx="16" cy="21" r="1.500"/><circle cx="20" cy="17" r="1.500"/></g></svg></button>
      <button aria-label="Дорожный граф"><svg class="size-6" viewBox="0 0 24 24"><path d="M2 2h19v21H2z" fill="#12a5f4" stroke="#555"/><path d="M2 13l9-1 5-10M11 12l10 9" fill="none" stroke="#124"/><g fill="#fff" stroke="#444"><circle cx="2" cy="13" r="1.500"/><circle cx="11" cy="12" r="1.500"/><circle cx="16" cy="2" r="1.500"/><circle cx="21.500" cy="22" r="1.500"/></g></svg></button>
    </div>

    <!-- Docks -->
    <div class="flex w-[294px] shrink-0 flex-col pr-px pl-px">
      <div class="mt-1 flex h-[14px] shrink-0 items-center gap-2 text-[10px]">
        <svg class="h-[5px] w-0 flex-1"><rect width="100%" height="100%" fill="url(#grip)"/></svg>
        <h2>Обозреватель</h2>
        <svg class="h-[5px] w-0 flex-1"><rect width="100%" height="100%" fill="url(#grip)"/></svg>
        <div class="-ml-1.5 flex gap-0.5"><button aria-label="Открепить"><svg class="size-[13px]"><use href="#float"/></svg></button><button aria-label="Закрыть"><svg class="size-[13px]"><use href="#close"/></svg></button></div>
      </div>
      <div class="mb-[2px] flex h-[31px] shrink-0 items-center gap-4 pl-1">
        <button aria-label="Обновить"><svg class="size-4" viewBox="0 0 24 24"><use href="#refresh"/></svg></button>
        <button aria-label="Добавить слой"><svg class="size-4" viewBox="0 0 16 16"><use href="#b-plus" x="1" y="1" width="14" height="14"/></svg></button>
        <button aria-label="Фильтр"><svg class="size-4"><use href="#funnel"/></svg></button>
        <button aria-label="Свернуть"><svg class="size-4"><use href="#expand"/><path d="M12 14V5M10 8l2-3 2 3z" stroke="red" stroke-width="2" fill="red"/></svg></button>
      </div>
      <div class="grid h-[116px] shrink-0 grid-cols-[1fr_16px] grid-rows-[1fr_16px] rounded-sm border border-[#aaa] bg-white">
        <ul class="overflow-hidden pt-0.5 [&>li]:flex [&>li]:h-4 [&>li]:items-center [&>li]:whitespace-nowrap">
          <li><svg class="h-4 w-5"><use href="#t-plus"/></svg><svg class="mx-1 h-4 w-[14px]"><use href="#folder"/></svg><span class="pl-0.5">Каталог проекта</span></li>
          <li><svg class="h-4 w-5"><use href="#t-plus"/></svg><svg class="mx-1 h-4 w-[14px]"><use href="#folder"/></svg><span class="pl-0.5">Домашний каталог</span></li>
          <li><svg class="h-4 w-5"><use href="#t-mid"/></svg><svg class="mx-1 h-4 w-[14px]" viewBox="0 0 14 14"><path d="M7 0l2 5h5l-4 3 2 6-5-4-5 4 2-6-4-3h5z" fill="#eeeee6" stroke="#b0b0a4"/></svg><span class="pl-0.5">Избранное</span></li>
          <li><svg class="h-4 w-5"><use href="#t-minus"/></svg><svg class="mx-1 h-4 w-[14px]"><use href="#folder"/></svg><span class="pl-0.5">C:/</span></li>
          <li><svg class="h-4 w-5"><use href="#t-line"/></svg><svg class="h-4 w-5"><use href="#t-plus"/></svg><svg class="mx-1 h-4 w-[14px]"><use href="#folder"/></svg><span class="pl-0.5">Program Files</span></li>
          <li><svg class="h-4 w-5"><use href="#t-line"/></svg><svg class="h-4 w-5"><use href="#t-plus"/></svg><svg class="mx-1 h-4 w-[14px]"><use href="#folder"/></svg><span class="pl-0.5">Program Files (x86)</span></li>
        </ul>
        <div class="flex flex-col bg-[#f4f4f4] [&>button]:flex [&>button]:h-4 [&>button]:items-center [&>button]:justify-center [&>button]:rounded-xs [&>button]:border [&>button]:border-[#999] [&>button]:bg-[#f6f6f6]">
          <button aria-label="Вверх"><svg class="h-1 w-[7px]" viewBox="0 0 8 5"><use href="#up"/></svg></button>
          <div class="h-[26px] rounded-xs border border-[#999] bg-linear-to-r from-white to-[#ddd]"></div>
          <div class="flex-1"></div>
          <button aria-label="Вверх"><svg class="h-1 w-[7px]" viewBox="0 0 8 5"><use href="#up"/></svg></button>
          <button aria-label="Вниз"><svg class="h-1 w-[7px]" viewBox="0 0 8 5"><use href="#down"/></svg></button>
        </div>
        <div class="flex bg-[#f4f4f4] [&>button]:flex [&>button]:w-4 [&>button]:items-center [&>button]:justify-center [&>button]:rounded-xs [&>button]:border [&>button]:border-[#999] [&>button]:bg-[#f6f6f6]">
          <button aria-label="Влево"><svg class="h-[7px] w-1" viewBox="0 0 5 8"><path d="M5 0v8L0 4z"/></svg></button>
          <div class="flex w-[168px] items-center justify-center rounded-xs border border-[#999] bg-linear-to-b from-white to-[#ddd]"><svg class="h-[9px] w-5"><path d="M0 1.500h20M0 4.500h20M0 7.500h20" stroke="#999" stroke-dasharray="1 2"/></svg></div>
          <div class="flex-1"></div>
          <button aria-label="Влево"><svg class="h-[7px] w-1" viewBox="0 0 5 8"><path d="M5 0v8L0 4z"/></svg></button>
          <button aria-label="Вправо"><svg class="h-[7px] w-1" viewBox="0 0 5 8"><path d="M0 0v8l5-4z"/></svg></button>
        </div>
        <div class="bg-[#f0f0f0]"></div>
      </div>

      <svg class="mx-auto mt-[2px] mb-px h-[5px] w-[94px] shrink-0"><rect width="100%" height="100%" fill="url(#grip)"/></svg>
      <div class="flex h-[14px] shrink-0 items-center gap-2 text-[10px]">
        <svg class="h-[5px] w-0 flex-1"><rect width="100%" height="100%" fill="url(#grip)"/></svg>
        <h2>Слои</h2>
        <svg class="h-[5px] w-0 flex-1"><rect width="100%" height="100%" fill="url(#grip)"/></svg>
        <div class="-ml-1.5 flex gap-0.5"><button aria-label="Открепить"><svg class="size-[13px]"><use href="#float"/></svg></button><button aria-label="Закрыть"><svg class="size-[13px]"><use href="#close"/></svg></button></div>
      </div>
      <div class="mb-1 flex h-8 shrink-0 items-center gap-4 pl-2">
        <button aria-label="Добавить группу"><svg class="size-4" viewBox="0 0 16 16" fill="none" stroke="#888"><path d="M2.500 5v10h7M5.500 4.500h7v9h-7zM8 2.500h6v8"/><path d="M8 11V3q1-3 2 0v6" stroke="#34536f" stroke-width="1.400"/></svg></button>
        <button aria-label="Видимость"><svg class="size-4" viewBox="0 0 16 16"><path d="M0 7q7-7 14 0-7 6-14 0z" fill="#dde4ea" stroke="#999"/><circle cx="7" cy="7" r="2.500" fill="#4a7090"/><path d="M11 13h5l-2.500 3z"/></svg></button>
        <button aria-label="Фильтр"><svg class="size-4"><use href="#funnel"/></svg></button>
        <button aria-label="Развернуть"><svg class="size-4"><use href="#expand"/><path d="M12 4v8M10 9l2 3 2-3z" stroke="red" stroke-width="2" fill="red"/></svg></button>
        <button aria-label="Свернуть"><svg class="size-4"><use href="#expand"/><path d="M12 14V5M10 8l2-3 2 3z" stroke="red" stroke-width="2" fill="red"/></svg></button>
        <button aria-label="Удалить"><svg class="size-4" viewBox="0 0 16 16"><path d="M1.500 1.500h12v12h-12z" fill="#f2f2f2" stroke="#999"/><rect x="9" y="9" width="7" height="7" rx="1" fill="#e06060"/><path d="M10.500 12.500h4" stroke="#fff" stroke-width="1.500"/></svg></button>
      </div>
      <ul class="h-[115px] shrink-0 overflow-hidden rounded-sm border border-[#aaa] bg-white pt-px font-bold [&>li]:flex [&>li]:h-4 [&>li]:items-center [&_input]:mr-[5px] [&_input]:ml-[3px] [&_input]:flex [&_input]:size-[13px] [&_input]:appearance-none [&_input]:items-center [&_input]:justify-center [&_input]:border [&_input]:border-[#c4c4c4] [&_input]:bg-[#fafafa] [&_input:checked]:before:content-['✖']">
        <li><svg class="h-4 w-5"><use href="#t-minus"/></svg><input type="checkbox" id="l1"><svg class="mr-[7px] size-4"><use href="#check"/></svg><label for="l1">classification</label></li>
        <li><svg class="h-4 w-5"><use href="#t-line"/></svg><svg class="mr-[3px] h-4 w-5"><use href="#t-mid"/></svg><span class="size-4 bg-[#ff0000]"></span></li>
        <li><svg class="h-4 w-5"><use href="#t-line"/></svg><svg class="mr-[3px] h-4 w-5"><use href="#t-mid"/></svg><span class="size-4 bg-[#ffff00]"></span></li>
        <li><svg class="h-4 w-5"><use href="#t-line"/></svg><svg class="mr-[3px] h-4 w-5"><use href="#t-end"/></svg><span class="size-4 bg-[#0000ff]"></span></li>
        <li class="bg-[#f0f0f0]"><svg class="h-4 w-5"><use href="#t-mid"/></svg><input type="checkbox" id="l2" checked><span class="mr-[7px] size-4 border border-[#5a508c] bg-[#7d74b0]"></span><label class="underline" for="l2">classification_mode7</label></li>
        <li><svg class="h-4 w-5"><use href="#t-mid"/></svg><input type="checkbox" id="l3" checked><span class="mr-[7px] size-4 border border-[#6c6840] bg-[#d6cc68]"></span><label for="l3">signature</label></li>
        <li><svg class="h-4 w-5"><use href="#t-end"/></svg><input type="checkbox" id="l4" checked><svg class="mr-[7px] size-4"><use href="#check"/></svg><label for="l4">LC81790232014255LGN00</label></li>
      </ul>

      <svg class="mx-auto mt-[2px] mb-px h-[5px] w-[94px] shrink-0"><rect width="100%" height="100%" fill="url(#grip)"/></svg>
      <div class="flex h-[14px] shrink-0 items-center gap-2 text-[10px]">
        <svg class="h-[5px] w-0 flex-1"><rect width="100%" height="100%" fill="url(#grip)"/></svg>
        <h2>Кратчайший маршрут</h2>
        <svg class="h-[5px] w-0 flex-1"><rect width="100%" height="100%" fill="url(#grip)"/></svg>
        <div class="-ml-1.5 flex gap-0.5"><button aria-label="Открепить"><svg class="size-[13px]"><use href="#float"/></svg></button><button aria-label="Закрыть"><svg class="size-[13px]"><use href="#close"/></svg></button></div>
      </div>
      <form class="flex flex-col pt-3 pr-[8px] pl-[7px] [&_input]:h-5 [&_input]:min-w-0 [&_input]:flex-1 [&_input]:rounded-sm [&_input]:border [&_input]:border-[#aaa] [&_input]:bg-white [&_input]:px-1">
        <label for="start">Начальная точка</label>
        <div class="mb-2 flex items-center gap-[7px] pt-px"><input id="start" type="text"><button type="button" class="flex h-[25px] w-[26px] items-center justify-center rounded-sm border border-[#888] bg-[#f6f6f6]" aria-label="Указать начало"><svg class="size-4"><use href="#cross"/></svg></button></div>
        <label for="end">Конечная точка</label>
        <div class="mb-2 flex items-center gap-[7px] pt-px"><input id="end" type="text"><button type="button" class="flex h-[25px] w-[26px] items-center justify-center rounded-sm border border-[#888] bg-[#f6f6f6]" aria-label="Указать конец"><svg class="size-4"><use href="#cross"/></svg></button></div>
        <div class="mb-[7px] flex items-center justify-between">
          <label for="crit">Критерий</label>
          <div class="relative w-[136px]"><select id="crit" class="h-5 w-full appearance-none rounded-sm border border-[#aaa] bg-linear-to-b from-[#fbfbfb] to-[#e2e2e2] pl-[3px]"><option>Расстояние</option></select><svg class="pointer-events-none absolute top-0 right-0 h-5 w-4"><path d="M.5 1v18" stroke="#aaa"/><path d="M4 8h8l-4 5z"/></svg></div>
        </div>
        <div class="mb-[7px] flex items-center gap-1"><label for="dist">Расстояние</label><input id="dist" type="text"></div>
        <div class="mb-[9px] flex items-center gap-1"><label for="time">Время</label><input id="time" type="text"></div>
        <div class="mb-[9px] grid grid-cols-3 gap-[10px] [&>button]:h-[23px] [&>button]:rounded-sm [&>button]:border [&>button]:border-[#b0b0b0] [&>button]:bg-linear-to-b [&>button]:from-[#fbfbfb] [&>button]:to-[#e0e0e0]">
          <button type="button">Рассчитать</button><button type="button">Экспорт</button><button type="button">Очистить</button>
        </div>
        <button type="button" class="flex h-[26px] items-center justify-center gap-[3px] rounded-sm border border-[#b0b0b0] bg-linear-to-b from-[#fbfbfb] to-[#e0e0e0]"><svg class="size-4" viewBox="0 0 16 16"><circle cx="8" cy="8" r="6" fill="none" stroke="#eee" stroke-width="4"/><path d="M1 1l4 4M15 1l-4 4M1 15l4-4M15 15l-4-4" stroke="#d44" stroke-width="4"/><circle cx="8" cy="8" r="7.200" fill="none" stroke="#c99" stroke-dasharray="3 2"/></svg>Справка</button>
      </form>
    </div>
    <div class="flex w-[7px] shrink-0 items-center"><svg class="mb-[130px] h-[220px] w-[5px]"><rect width="100%" height="100%" fill="url(#grip)"/></svg></div>

    <!-- Map canvas -->
    <section class="relative mt-0.5 mr-0.5 min-w-0 flex-1 border border-[#b0a8b0] bg-[#9d6290]">
      <svg class="absolute inset-0 h-full w-full" viewBox="354 165 1244 663" preserveAspectRatio="xMinYMin slice" fill="none" stroke="#120a12" shape-rendering="crispEdges">
        <g transform="translate(1290 160) scale(.3333)" stroke-width="3">
          <path d="M95 15L70 40 62 65 66 90 55 110 40 130 15 128M134 15L128 40 105 65 85 90 82 103 65 108 50 140 30 166H15M232 15V55L215 67 190 80 172 88V158L150 185 132 220 118 255 85 270 55 292 30 298 15 310M288 15L270 38 242 58 232 52M217 67L230 92 245 110 285 130 300 115 310 88 345 70 352 74 365 62 380 52 392 15M438 15V45L415 66 395 75H352M172 158L220 180 262 198V208L240 228 210 242 182 244 160 262 145 297 112 280 110 250M90 270L85 300 60 320 45 343 15 344M94 270L95 350 75 365 55 364 42 345M50 364L40 390 42 415 52 435 78 434 86 405 66 375M66 375l28 18-8 18"/>
          <path d="M302 175h28l25 28-14 17-12-2-28-32zM362 267h12l4 5-15 3zM400 283l24 38 8 20 28-4 2-18-10-8-20 0-16-30 16-7h22l8 14-8 16M400 283l16-2M254 255L262 242H280L308 272V300L320 320 365 328 397 342 406 370 386 392 380 425 391 448 384 475 310 494 262 496 230 519H190L185 495 160 494 132 465V445L148 420 160 410H182L210 428 228 457H268L300 445V430L280 420 278 390 268 360 254 330z"/>
          <path d="M924 175L895 195 855 212H790L755 207 730 213 707 240 710 258 685 300 655 312 625 302 585 275 570 285 567 304 530 318V332L550 350 572 344 633 350 655 322M655 318L680 330 720 394 755 398 780 427H815L830 411H880L900 430 924 442M924 310L862 295 825 283 795 260H760L743 272 745 290 770 304H798L825 325 870 345 924 358M518 495H568L590 525 599 550V580L585 615 560 655 528 688 495 660 491 645 513 598 506 590V555L500 550V512zM924 565L895 600 881 640 895 668 912 680 924 702"/>
          <path d="M15 740L35 728 52 702H76L80 730 92 740H130L137 747 165 715 170 690 140 630 150 602H167L190 628 232 685V735L245 747 290 748 295 760 275 769 265 763H245L212 787 170 765 145 763 115 785H98L80 810 45 840 28 834 15 842M20 862h30l14 15v20l-22 14-24-17v-30M80 637l12-4 2 8-14 8zM72 666l12-8M40 446l10-4 4 6-10 10zM20 490l10-4-4 12 24 18v10H30l-12-18z"/>
        </g>
        <g transform="translate(1290 480) scale(.3333)" stroke-width="3">
          <path d="M52 24l3 3M15 230L65 187 125 175 141 165V148L128 140H75L60 147 40 135V118L52 108 115 95H192L225 60 243 49 278 82V105L286 112V128L278 138V195L260 214H220L207 193 180 198 150 217 120 245 107 275 85 298 78 315 82 331 115 325 190 321 240 305 267 277 275 284 315 265 345 247 430 216H460L497 233 530 267 560 277 572 268 605 302 640 327 700 358 722 385 747 444H774L782 400V365L800 332 820 310 836 270V240L862 215 900 223 924 208M262 362h35l25 25-8 14h-24l-28-24zM762 177l5 4-4 6-3-5zM50 408l10-9h20l45 32v14l-10 15H95l-28-7zM132 476h20l11 20-8 18h-26l-4-18zM15 484L40 476 64 495V540L58 547 64 555V577L45 588 24 592 22 605 17 592M868 522l8-8 14 2-3 20-14 9-7-7z"/>
          <path d="M15 760L45 735 78 730 88 748 65 795V830L71 855 60 885 41 915V955L55 965 115 972 150 990 210 996 245 1038 260 1044M270 1044L330 970 312 950 280 973 263 960 290 927 305 920H335L390 875 470 825 540 775 575 768 590 773 640 767H675L698 795V830L690 850 697 880 704 900 720 915 695 934H670L635 890 610 880 575 895 555 920V935L560 960 545 1015 552 1044M628 1044L625 1020 645 965 665 950 675 955 678 975 710 1003 736 1015 708 1044M794 613L825 643H848L860 666 830 697 798 722 810 750 855 778 858 795 835 820 807 832 830 850 870 855 885 872 924 895M794 613L755 660 740 695 722 735 724 758 770 785 775 820 750 870 732 915 752 945 780 952 810 979 855 980 924 943"/>
        </g>
        <g transform="translate(340 780) scale(.4209 .3333)" stroke-width="2.600">
          <path d="M103 144V96h28l30 48M400 47l-5 22 10 28 20 7h40l18-22 4-35M510 144V104l20-9h40l22 42 10-4h36l2 11M672 144l-4-10 8-16h24l30 26M1006 47V75l30 40 4 29M1170 47v60l14 37M1255 144l12-65 25-8 25 15 50-2 8-20M1440 47l-12 60 12 37M1465 144l10-40 30-8 14 18-5 30M1450 47l42 4M1568 60l-34 32 34 44"/>
        </g>
        <g transform="translate(980 780) scale(.3954 .3333)" stroke-width="2.600">
          <path d="M75 47L60 55 15 90 30 110 45 144M80 47l8 50 8 25-8 22M122 47v20l20 8 42-24M390 47l10 15 12 10 25-22 50 50 50 18 6-20-38-50M580 47v12l12 6 2-18M672 68l10-5 14 14-8 20-10-2-8-14z"/>
        </g>
        <path d="M354 425l6-3M354 447l6-7M354 676h22M354 692h22M354 738h22M354 754l6 12M393 169l6-5M408 164l6 5M661 168l8-3 8 3M773 165l6 5M801 165l5 5M951 165v5M1240 165v5M376 320l-4 4v4M376 375q-8 5-1 12M376 420q6 8 0 15"/>
      </svg>

      <!-- Layer properties window -->
      <div role="dialog" aria-label="Свойства слоя" class="absolute top-[5px] left-[21px] flex h-[626px] w-[921px] flex-col border border-[#d64040] bg-[#ff5252] px-[7px] pb-[6px] shadow-[0_0_4px_rgba(0,0,0,.4)]">
        <div class="flex h-[29px] shrink-0 items-center pl-[2px]">
          <svg class="size-4"><use href="#qgis"/></svg>
          <h2 class="flex-1 pb-0.5 pl-[58px] text-center text-[14px] leading-5 text-[#3c2020] font-['Open_Sans',sans-serif]">Свойства слоя — classification_mode7 | Стиль</h2>
          <div class="flex self-start"><button class="w-7 text-[13px] leading-5 font-bold text-[#4a1c1c]">?</button><button class="flex h-5 w-[45px] items-center justify-center bg-[#c75050]" aria-label="Закрыть"><svg class="size-2" viewBox="0 0 8 8"><path d="M1 1l6 6M7 1L1 7" stroke="#fff" stroke-width="1.600"/></svg></button></div>
        </div>
        <div class="flex min-h-0 flex-1 bg-[#f0f0f0]">
          <nav class="w-[150px] shrink-0 bg-[#5e5e5e] text-white [&>a]:flex [&>a]:h-[34px] [&>a]:items-center [&>a]:gap-1.5 [&>a]:pt-0.5 [&>a]:pl-1 [&_svg]:size-[26px]">
            <a href="#"><svg viewBox="0 0 26 26"><path d="M1 1l12 12" stroke="#ddd" stroke-width="2"/><path d="M12 13l12 11" stroke="#f07818" stroke-width="5"/><path d="M17 8L4 22" stroke="#2f5f9c" stroke-width="5"/><path d="M18 8l3 3 5-3-3-5q-6-5-12-2l6 3z" fill="#2c3238"/></svg>Общие</a>
            <a href="#" class="bg-[#f0f0f0] pl-[7px]! text-black"><svg viewBox="0 0 26 26"><path d="M2 5l12 4-2 5-11-2z" fill="#9fc87a"/><path d="M1 10l11 3-1 5-10-3z" fill="#6aa5dc"/><path d="M1 15l10 3 4 4q-8 3-14-3z" fill="#d65a72"/><path d="M9 13l6-5 6 6-5 7-7 1z" fill="#c8bc9c" stroke="#a3977a"/><path d="M18 9l7-8" stroke="#a3977a" stroke-width="3"/></svg>Стиль</a>
            <a href="#"><svg viewBox="0 0 24 24"><use href="#tag"/></svg>Подписи</a>
            <a href="#"><svg viewBox="0 0 26 26"><path d="M1 3h23v20H1z" fill="#d8dad2"/><path d="M1 3h23v5H1z" fill="#5a8cc8"/><path d="M1 11.500h23M1 14.500h23M1 17.500h23M1 20.500h23M8.500 8v15M16.500 8v15" stroke="#8f9088"/></svg>Поля</a>
            <a href="#"><svg viewBox="0 0 26 26"><path d="M1 14l8-7 8 8-7 8-6-1z" fill="#dc9c50" stroke="#a86c24"/><path d="M13 11l9-9" stroke="#d89040" stroke-width="3"/></svg>Отрисовка</a>
            <a href="#"><svg viewBox="0 0 26 26"><path d="M5 3h15q4 0 4 4v5q0 5-5 5h-7l-4 6v-6q-7 0-7-4V7q0-4 4-4z" fill="#ecdf8c" stroke="#c9b24c"/></svg>Вывод</a>
            <a href="#"><svg viewBox="0 0 26 26"><use href="#gearW" x="4" width="22" height="22"/><circle cx="15" cy="11" r="6" fill="#4a80bc" stroke="#2c5c8c"/><path d="M13 8l5 3-5 3z" fill="#fff"/><circle cx="4" cy="22" r="3" fill="#5a8cc8" stroke="#a8c4e0" stroke-dasharray="2 1"/></svg>Действия</a>
            <a href="#"><svg viewBox="0 0 26 26"><circle cx="2.500" cy="12" r="2.500" fill="#4a80bc"/><path d="M7 12L22 1l-1 4 4 3v11l-4 1 1 4z" fill="url(#blue)" stroke="#24527c" stroke-width=".8"/></svg>Связи</a>
            <a href="#"><svg viewBox="0 0 26 26"><path d="M1 3h24v16H1z" fill="#e4e4dc" stroke="#bbb"/><path d="M1 2v19" stroke="#ddd" stroke-width="2"/><path d="M6 10a5 5 0 0 1 6-6v6z" fill="#f0d080"/><path d="M12 4a6 6 0 0 1 4 9l-4-3z" fill="#d04030"/><path d="M7 12l5-2 4 3q-5 5-9-1z" fill="#4a80bc"/></svg>Диаграммы</a>
            <a href="#"><svg viewBox="0 0 26 26"><circle cx="13" cy="13" r="12" fill="#5b93d0" stroke="#8fb8e4"/><text x="9" y="21" font-size="22" font-style="italic" font-weight="700" font-family="Liberation Serif" fill="#fff">i</text></svg>Метаданные</a>
          </nav>
          <div class="flex w-[6px] shrink-0 items-center pl-px"><svg class="h-[206px] w-[4px]"><rect width="100%" height="100%" fill="url(#grip)"/></svg></div>
          <div class="flex min-w-0 flex-1 flex-col pt-[3px] pr-[3px] pb-1">
            <div class="flex min-h-0 flex-1 gap-[11px]">
              <!-- Symbol tree -->
              <div class="flex w-[269px] shrink-0 flex-col">
                <div class="relative w-[173px]"><select aria-label="Тип" class="h-[22px] w-full appearance-none rounded-sm border border-[#aaa] bg-linear-to-b from-[#fbfbfb] to-[#e2e2e2] pl-[23px]"><option>Обычный знак</option></select><svg class="pointer-events-none absolute top-[3px] left-[6px] size-4" viewBox="0 0 16 16"><path d="M2 1h6v3h4v4H8v3h4v3H5v-3H2V8h4V5H2z" fill="#2fa574"/></svg><svg class="pointer-events-none absolute top-0 right-0 h-[22px] w-4"><path d="M.5 1v20" stroke="#aaa"/><path d="M4 9h8l-4 5z"/></svg></div>
                <div class="mt-[7px] mb-[7px] flex h-[104px] shrink-0 items-center justify-center rounded-sm border border-[#aaa]"><div class="size-[61px] border border-black bg-[#9d6290]"></div></div>
                <ul class="flex-1 rounded-sm border border-[#aaa] bg-white">
                  <li class="flex h-8 items-center bg-[#f0f0f0] pt-px font-bold"><svg class="h-4 w-5"><use href="#t-minus"/></svg><span class="mr-1.5 ml-[3px] size-4 border border-[#4f4784] bg-[#7d74b0]"></span>Fill</li>
                  <li class="flex h-8 items-center pt-px"><svg class="ml-5 h-4 w-5"><use href="#t-end"/></svg><span class="mr-1.5 ml-[3px] size-4 border border-[#3c2438] bg-[#9d6290]"></span>Простая заливка</li>
                </ul>
                <div class="flex items-center pt-[9px] [&>button]:rounded-sm [&>button]:border [&>button]:border-[#999] [&>button]:bg-linear-to-b [&>button]:from-[#fbfbfb] [&>button]:to-[#e2e2e2]">
                  <button class="mr-[6px] flex h-[26px] w-[30px] items-center justify-center" aria-label="Добавить"><svg class="size-4" viewBox="0 0 16 16"><path d="M5 1h6v4h4v6h-4v4H5v-4H1V5h4z" fill="#d8efd8" stroke="#9bbf9b"/><path d="M8 3v10M3 8h10" stroke="#1c9030" stroke-width="3.500"/></svg></button>
                  <button class="mr-[6px] flex h-[26px] w-[30px] items-center justify-center" aria-label="Удалить"><svg class="size-4" viewBox="0 0 16 16"><path d="M1 4h14v8H1z" fill="#eee" stroke="#aaa"/><path d="M4 6h8v4H4z" fill="#888"/></svg></button>
                  <button class="mr-[6px] flex h-[26px] w-[30px] items-center justify-center" aria-label="Заблокировать"><svg class="size-4" viewBox="0 0 16 16"><path d="M6 8V4q2-5 6-1v2" fill="none" stroke="#ccc" stroke-width="2"/><path d="M2 8h11v8H2z" fill="#d0d0d0"/></svg></button>
                  <button class="mr-[6px] flex h-[26px] w-[30px] items-center justify-center" aria-label="Выше"><svg class="size-4" viewBox="0 0 16 16"><path d="M8 3l7 8v2H1v-2z" fill="#aaa" stroke="#777"/></svg></button>
                  <button class="flex h-[26px] w-[30px] items-center justify-center" aria-label="Ниже"><svg class="size-4" viewBox="0 0 16 16"><path d="M8 13l7-8V3H1v2z" fill="#aaa" stroke="#777"/></svg></button>
                  <button class="ml-auto h-[22px] w-[70px]">Сохранить</button>
                </div>
              </div>
              <!-- Symbol settings -->
              <div class="flex min-w-0 flex-1 flex-col pt-[30px]">
                <div class="grid grid-cols-[100px_120px] items-center gap-y-[5px]">
                  <label for="units">Единицы</label>
                  <div class="relative"><select id="units" class="h-5 w-full appearance-none rounded-sm border border-[#aaa] bg-linear-to-b from-[#fbfbfb] to-[#e2e2e2] pl-[3px]"><option>Миллиметры</option></select><svg class="pointer-events-none absolute top-0 right-0 h-5 w-4"><path d="M.5 1v18" stroke="#aaa"/><path d="M4 8h8l-4 5z"/></svg></div>
                  <label for="alpha" class="h-5 leading-5 whitespace-nowrap">Прозрачность: 0%</label>
                  <input id="alpha" type="range" value="0" class="h-1 w-full appearance-none rounded-full border border-[#999] bg-white [&::-webkit-slider-thumb]:h-[15px] [&::-webkit-slider-thumb]:w-[11px] [&::-webkit-slider-thumb]:appearance-none [&::-webkit-slider-thumb]:rounded-t-xs [&::-webkit-slider-thumb]:rounded-b-full [&::-webkit-slider-thumb]:border [&::-webkit-slider-thumb]:border-[#888] [&::-webkit-slider-thumb]:bg-[#f4f4f4]">
                  <span>Цвет</span>
                  <div class="flex gap-px"><button class="h-[22px] flex-1 rounded-sm border border-[#888] bg-[#f6f6f6] px-1 py-0.5" aria-label="Цвет"><span class="block h-full rounded-xs bg-[#9d6290]"></span></button><button class="flex h-[22px] w-3 items-center justify-center rounded-sm border border-[#888] bg-[#f6f6f6]" aria-label="Меню цвета"><svg class="h-[5px] w-2 shrink-0"><use href="#down"/></svg></button></div>
                </div>
                <hr class="my-[6px] border-[#999]">
                <div class="flex items-center">
                  <label for="group" class="w-[81px] shrink-0 whitespace-nowrap">Знаки в группе</label>
                  <div class="relative mr-[3px] flex-1"><input id="group" type="text" class="h-5 w-full rounded-sm border border-[#aaa] bg-white px-1"><svg class="pointer-events-none absolute top-0 right-0 h-5 w-4"><path d="M1 1h14v18H1z" fill="#ececec"/><path d="M.5 1v18" stroke="#aaa"/><path d="M4 8h8l-4 5z"/></svg></div>
                  <button class="h-[23px] w-[119px] shrink-0 rounded-sm border border-[#999] bg-linear-to-b from-[#fbfbfb] to-[#e2e2e2] whitespace-nowrap">Открыть библиотеку</button>
                </div>
                <ul class="mt-[5px] flex flex-1 gap-[11px] rounded-sm border border-[#aaa] bg-white pt-[6px] pl-[9px] text-[12px] [&>li]:flex [&>li]:w-12 [&>li]:flex-col [&>li]:items-center [&>li]:gap-0.5 [&_svg]:size-12">
                  <li><svg viewBox="0 0 48 48"><path d="M.5.500h47v47H.5z" fill="#f0f2c6" stroke="#d0d2a4"/><path d="M0 0l3 3M48 0l-4 3M0 48l3-3M48 48l-4-4" stroke="#333" stroke-width="1.500"/></svg>corners</li>
                  <li><svg viewBox="0 0 48 48"><path d="M.5.500h47v47H.5z" fill="#a5bfdd" stroke="#8aa6c4"/></svg>diagonal</li>
                  <li><svg viewBox="0 0 48 48"><path d="M.5.500h47v47H.5z" fill="#f0f2c6" stroke="#d0d2a4"/><path d="M0 0h48v48H0z" fill="url(#dots)"/></svg>dotted</li>
                  <li><svg viewBox="0 0 48 48"><path d="M.5.500h47v47H.5z" fill="#b9dc68" stroke="#9dbd52"/></svg>green</li>
                  <li><svg viewBox="0 0 48 48"><path d="M.5.500h47v47H.5z" fill="#f0f2c6" stroke="#d0d2a4"/></svg>land</li>
                  <li><svg viewBox="0 0 48 48"><path d="M.5.500h47v47H.5z" fill="#a5bfdd" stroke="#8aa6c4"/></svg>water</li>
                  <li><svg viewBox="0 0 48 48"><path d="M.5.500h47v47H.5z" fill="#b9dc68" stroke="#9dbd52"/><path d="M0 0h48v48H0z" fill="url(#dashes)"/></svg>wine</li>
                </ul>
                <button class="mt-[6px] flex h-[23px] w-[102px] shrink-0 items-center justify-center gap-1 self-end rounded-sm border border-[#999] bg-linear-to-b from-[#fbfbfb] to-[#e2e2e2]">Дополнительно<svg class="mb-1 h-[3px] w-[5px]" viewBox="0 0 8 5"><use href="#down"/></svg></button>
              </div>
            </div>

            <fieldset class="mt-[10px] rounded-sm border border-[#bbb] px-[10px] pt-[9px] pb-[9px]">
              <legend class="-ml-[9px] flex h-4 items-start gap-1.5 pt-[3px] pr-2"><svg class="mt-1 h-2 w-[11px]" viewBox="0 0 8 5" preserveAspectRatio="none"><path d="M0 0h8L4 5z" fill="#333"/></svg>Отрисовка</legend>
              <div class="flex h-5 items-center">
                <label for="lalpha" class="w-[182px]">Прозрачность</label>
                <input id="lalpha" type="range" value="0" class="mr-[6px] h-1 flex-1 appearance-none rounded-full border border-[#999] bg-white [&::-webkit-slider-thumb]:h-[15px] [&::-webkit-slider-thumb]:w-[11px] [&::-webkit-slider-thumb]:appearance-none [&::-webkit-slider-thumb]:rounded-t-xs [&::-webkit-slider-thumb]:rounded-b-full [&::-webkit-slider-thumb]:border [&::-webkit-slider-thumb]:border-[#888] [&::-webkit-slider-thumb]:bg-[#f4f4f4]">
                <div class="flex h-5 w-[46px] overflow-hidden rounded-sm border border-[#aaa] bg-white"><input type="text" value="0" aria-label="Прозрачность, %" class="min-w-0 flex-1 pl-1"><div class="flex w-4 flex-col border-l border-[#aaa] bg-[#f0f0f0] [&>button]:flex [&>button]:flex-1 [&>button]:items-center [&>button]:justify-center"><button class="border-b border-[#bbb]" aria-label="Больше"><svg class="h-1 w-[7px]" viewBox="0 0 8 5"><use href="#up"/></svg></button><button aria-label="Меньше"><svg class="h-1 w-[7px]" viewBox="0 0 8 5"><use href="#down"/></svg></button></div></div>
              </div>
              <div class="mt-[6px] flex items-center">
                <label for="blend1" class="w-[182px]">Режим смешивания слоя</label>
                <div class="relative w-[176px]"><select id="blend1" class="h-5 w-full appearance-none rounded-sm border border-[#aaa] bg-linear-to-b from-[#fbfbfb] to-[#e2e2e2] pl-[3px]"><option>Обычный</option></select><svg class="pointer-events-none absolute top-0 right-0 h-5 w-4"><path d="M.5 1v18" stroke="#aaa"/><path d="M4 8h8l-4 5z"/></svg></div>
                <label for="blend2" class="flex-1 pl-[6px]">Режим смешивания объектов</label>
                <div class="relative w-[176px]"><select id="blend2" class="h-5 w-full appearance-none rounded-sm border border-[#aaa] bg-linear-to-b from-[#fbfbfb] to-[#e2e2e2] pl-[3px]"><option>Обычный</option></select><svg class="pointer-events-none absolute top-0 right-0 h-5 w-4"><path d="M.5 1v18" stroke="#aaa"/><path d="M4 8h8l-4 5z"/></svg></div>
              </div>
            </fieldset>
            <div class="mt-[6px] flex gap-[10px] [&>button]:h-[23px] [&>button]:w-[75px] [&>button]:rounded-sm [&>button]:border [&>button]:border-[#b0b0b0] [&>button]:bg-linear-to-b [&>button]:from-[#fbfbfb] [&>button]:to-[#e2e2e2]">
              <button class="mr-auto flex items-center justify-center gap-4 pl-2">Стиль<svg class="mb-1 h-[3px] w-[5px]" viewBox="0 0 8 5"><use href="#down"/></svg></button>
              <button class="border-[#666]!">OK</button><button>Отмена</button><button>Применить</button><button>Справка</button>
            </div>
          </div>
        </div>
      </div>
    </section>
  </main>

  <!-- Status bar -->
  <footer class="flex h-8 shrink-0 items-center justify-end pt-0.5 pr-[15px]">
    <button class="mr-2 flex size-5 items-center justify-center rounded-sm border border-[#888] bg-[#f6f6f6]" aria-label="Показывать координаты"><svg class="size-4" viewBox="0 0 16 16" fill="none" stroke="#222"><path d="M3 6q0-5 3-4l5 7q2 4-1 5t-5-2zM5 2l5 7M8 5l3-3M2 13l3 1" stroke-width="1.500"/><circle cx="10" cy="11" r="3" fill="#aaa"/></svg></button>
    <label for="coords" class="mr-[10px]">Координаты:</label>
    <input id="coords" type="text" value="656746,5919431" class="mr-2 h-5 w-[300px] rounded-sm border border-[#aaa] bg-white text-center">
    <label for="scale" class="mr-3">Масштаб</label>
    <div class="relative mr-[8px] w-[86px]"><select id="scale" class="h-5 w-full appearance-none rounded-sm border border-[#aaa] bg-white pl-1"><option>1:44 505</option></select><svg class="pointer-events-none absolute top-0 right-0 h-5 w-4"><path d="M1 1h14v18H1z" fill="#ececec"/><path d="M.5 1v18" stroke="#aaa"/><path d="M4 8h8l-4 5z"/></svg></div>
    <label for="rot" class="mr-[9px]">Вращение:</label>
    <div class="mr-[5px] flex h-6 w-[98px] overflow-hidden rounded-sm border border-[#aaa] bg-white"><input id="rot" type="text" value="0,0" class="min-w-0 flex-1 pl-1"><div class="flex w-4 flex-col border-l border-[#aaa] bg-[#f0f0f0] [&>button]:flex [&>button]:flex-1 [&>button]:items-center [&>button]:justify-center"><button class="border-b border-[#bbb]" aria-label="Больше"><svg class="h-1 w-[7px]" viewBox="0 0 8 5"><use href="#up"/></svg></button><button aria-label="Меньше"><svg class="h-1 w-[7px]" viewBox="0 0 8 5"><use href="#down"/></svg></button></div></div>
    <input id="render" type="checkbox" checked class="mr-1 flex size-[13px] appearance-none items-center justify-center border border-[#c4c4c4] bg-[#fafafa] checked:before:content-['✖']">
    <label for="render" class="mr-[17px]">Отрисовка</label>
    <button class="mr-[22px] flex items-center gap-[3px]"><svg class="size-4" viewBox="0 0 16 16" fill="none" stroke="#777"><circle cx="8" cy="8" r="6.500" fill="#d8d8d8" stroke-width="2" stroke-dasharray="3 1"/><path d="M2 8h12M8 2v12M5 3q-2 5 0 10M11 3q2 5 0 10"/></svg>EPSG:32636</button>
    <button aria-label="Сообщения"><svg class="size-4" viewBox="0 0 16 16"><ellipse cx="8" cy="7.500" rx="8" ry="6.500" fill="#5c5c5c"/><path d="M9 12l5 4V9z" fill="#5c5c5c"/></svg></button>
  </footer>

  <!-- Taskbar -->
  <div class="flex h-10 shrink-0 items-stretch bg-[#943032] pr-[25px] pl-[17px] text-[11px] text-white font-['Open_Sans',sans-serif]">
    <div class="flex gap-1 [&>button]:flex [&>button]:w-[58px] [&>button]:items-center [&>button]:justify-center [&_svg]:size-8">
      <button aria-label="Проводник"><svg viewBox="0 0 32 32"><path d="M1 3h11l2 3h14v20H1z" fill="#e8c65a"/><path d="M4 5h9l2 3h14v18H4z" fill="url(#gold)"/><path d="M5 3h6v2H5z" fill="#5c5"/><path d="M13 5h6v2h-6z" fill="#e84"/><path d="M22 5h6v2h-6z" fill="#48c"/><path d="M2 10h28l1 16H1z" fill="url(#gold)"/><path d="M5 29V19q0-2 2-2h18q2 0 2 2v10h-5v-6H10v6z" fill="#8ccdf0" stroke="#c8eafa"/></svg></button>
      <button aria-label="Плеер"><svg viewBox="0 0 32 32"><path d="M1 2l21 13L1 29z" fill="#6a5ac0"/><path d="M31 2v26L9 15z" fill="url(#violet)" opacity=".85"/><path d="M1 29l21-14-9-5z" fill="#4336a0"/></svg></button>
      <button aria-label="Winamp"><svg viewBox="0 0 32 32"><path d="M15 2l14 14-14 14L2 16z" fill="#fff" stroke="#111" stroke-width="1.500"/><path d="M25 2L7 13l-1 5 7-1-8 13 19-11 3-8-8 2z" fill="#f9a825" stroke="#4a2a08" stroke-width="1.400"/></svg></button>
      <button class="border border-[#c98789] bg-[#a95a5c]" aria-label="Яндекс.Браузер"><svg viewBox="0 0 32 32"><circle cx="16" cy="16" r="15" fill="#f4f4f4"/><path d="M8 8l8 9 8-9M16 16v11" fill="none" stroke="#d9232a" stroke-width="4"/></svg></button>
      <button aria-label="Viber"><svg viewBox="0 0 32 32"><path d="M16 1q15 0 15 13T18 27l-5 4v-4Q1 26 1 14T16 1z" fill="#7d55a0" stroke="#eee" stroke-width="1.800"/><path d="M9 7q3-1 4 4l-1 2q1 4 5 5l2-1q5 2 4 4-2 3-5 2Q10 20 8 11q0-3 1-4z" fill="#fff"/><path d="M17 6q7 0 8 8M17 9q4 0 5 5" fill="none" stroke="#fff" stroke-width="1.300"/></svg></button>
      <button class="border border-[#c98789] bg-[#a95a5c]" aria-label="uTorrent"><svg viewBox="0 0 32 32"><circle cx="16" cy="16" r="15.500" fill="#68b045"/><path d="M7 8l3 17M9 12q2 10 7 8t3-12M20 7q1 12 4 13h4" fill="none" stroke="#fff" stroke-width="4.500"/></svg></button>
      <button class="border border-[#e8caca] bg-[#bd8485]" aria-label="QGIS"><svg viewBox="0 0 24 24"><use href="#qgis"/></svg></button>
    </div>
    <div class="ml-auto flex items-center">
      <button class="mr-[12px]" aria-label="Скрытые значки"><svg class="h-1 w-[7px]" viewBox="0 0 8 5" fill="#fff"><use href="#up"/></svg></button>
      <svg class="mr-2 size-4" viewBox="0 0 16 16"><path d="M2 1v15" stroke="#fff" stroke-width="1.500"/><path d="M3 2h5l1 1h4v6H3z" fill="#fff"/><circle cx="11" cy="11" r="4.500" fill="#d42a2a"/><path d="M9 9l4 4M13 9l-4 4" stroke="#fff" stroke-width="1.400"/></svg>
      <svg class="mr-2 size-4" viewBox="0 0 16 16" fill="none" stroke="#fff" stroke-width="1.300"><path d="M6 4h9v8H6M8 15h6M11 12v3M1 1h4v4H1zM3 5v10h4"/></svg>
      <svg class="mr-4 size-4" viewBox="0 0 16 16"><path d="M1 6h3l4-4v12l-4-4H1z" fill="#fff"/><path d="M10 5q2 3 0 6M12 3q4 5 0 10" fill="none" stroke="#fff"/></svg>
      <button class="mr-4">РУС</button>
      <div class="text-center leading-[17px]"><time class="block">11:29</time><time class="block">07.01.2016</time></div>
    </div>
  </div>
</body>
</html>
